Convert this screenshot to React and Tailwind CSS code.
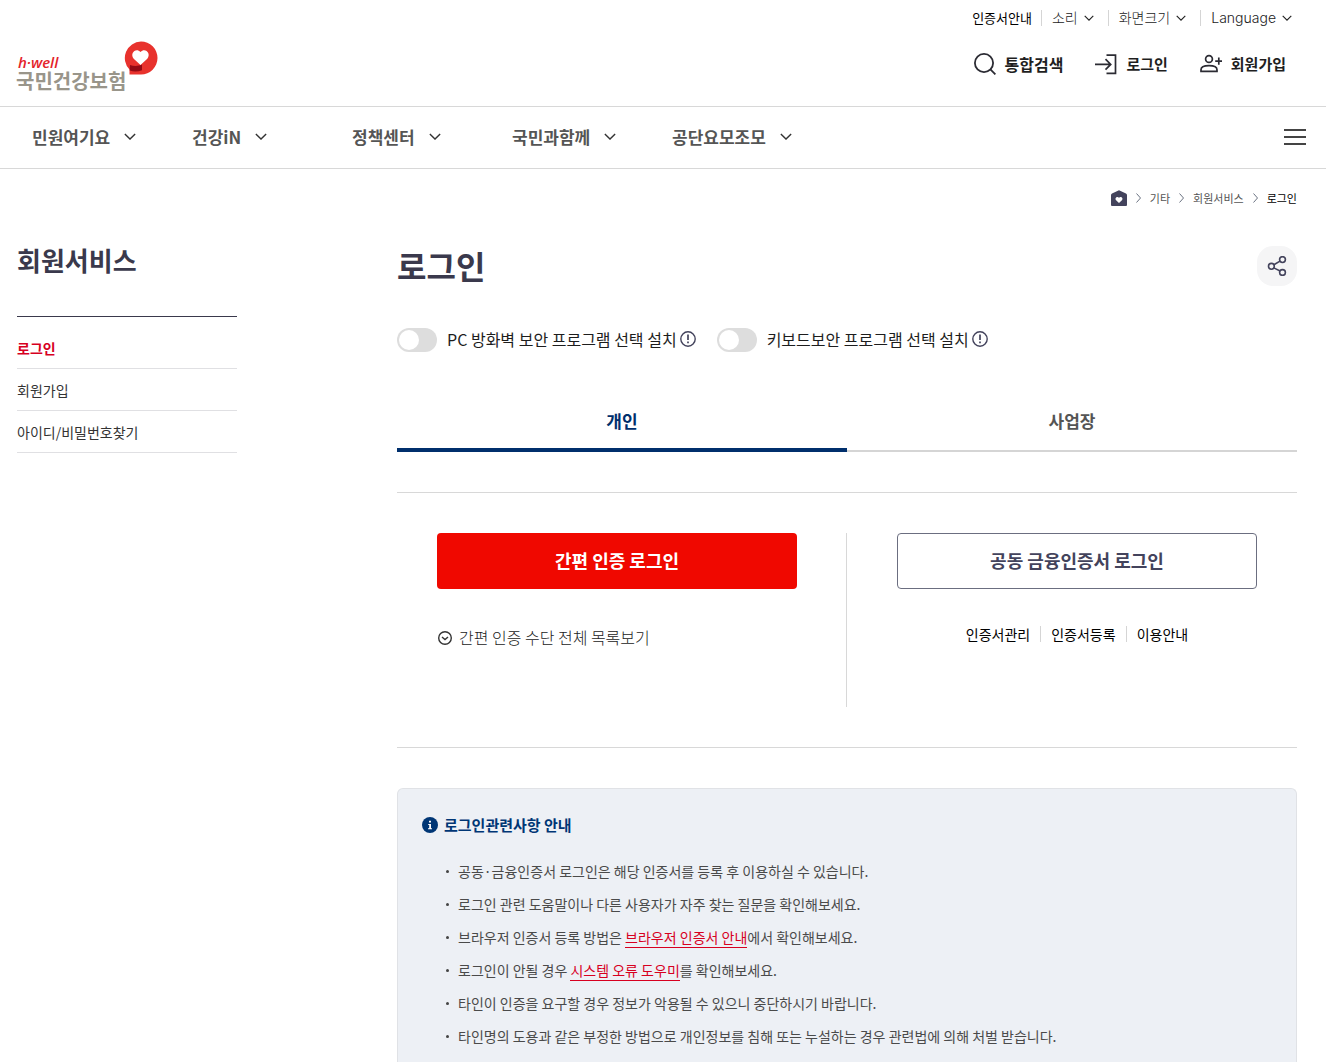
import React, { useState } from 'react';

const ChevronDown = ({ className }) => (
  <svg viewBox="0 0 14 8" className={className} fill="none" stroke="currentColor" aria-hidden="true">
    <path d="M1 1l6 6 6-6" strokeWidth="1.6" />
  </svg>
);

const ChevronRight = () => (
  <svg viewBox="0 0 5 10" className="h-[10px] w-[5px] text-gray-500" fill="none" stroke="currentColor" aria-hidden="true">
    <path d="M0.5 0.5L4.500 5 0.5 9.500" strokeWidth="1" />
  </svg>
);

const SearchIcon = () => (
  <svg viewBox="0 0 22 22" className="size-[22px]" fill="none" stroke="#2b2b33" strokeWidth="1.8" aria-hidden="true">
    <circle cx="10" cy="10" r="9.1" />
    <path d="M16.4 16.4l5 5" />
  </svg>
);

const LoginIcon = () => (
  <svg viewBox="0 0 22 22" className="size-[22px]" fill="none" stroke="#2b2b33" strokeWidth="1.7" aria-hidden="true">
    <path d="M11.5 2.2h9v18.2h-9M0 11.4h15.5M10.5 6.2l5.2 5.2-5.2 5.2" />
  </svg>
);

const JoinIcon = () => (
  <svg viewBox="0 0 22 22" className="size-[22px]" fill="none" stroke="#2b2b33" strokeWidth="1.7" aria-hidden="true">
    <circle cx="9" cy="6" r="3.4" />
    <path d="M1 18.4v-1.6c0-2.4 3-4.1 8-4.1s8 1.7 8 4.1v1.6zM18.8 4.6v7.2M15.2 8.2h7" />
  </svg>
);

const HomeIcon = () => (
  <svg viewBox="0 0 16 16" className="size-4" aria-hidden="true">
    <path d="M8 0.2L15 3.4q1 .5 1 1.6v10q0 1-1 1H1q-1 0-1-1V5q0-1.1 1-1.6z" fill="#43435c" />
    <path d="M8 13L5.1 10.2c-1.7-2 .9-4.5 2.9-2.5 2-2 4.6.5 2.9 2.5z" fill="#fff" />
  </svg>
);

const ShareIcon = () => (
  <svg viewBox="0 0 20 20" className="size-5" fill="none" stroke="#43435c" strokeWidth="1.6" aria-hidden="true">
    <circle cx="4.4" cy="10.3" r="2.9" />
    <circle cx="15.5" cy="3.6" r="2.9" />
    <circle cx="15.5" cy="16.5" r="2.9" />
    <path d="M6.9 8.8L13 5.1M6.8 11.9l6.3 3.1" />
  </svg>
);

const NoticeIcon = () => (
  <svg viewBox="0 0 16 16" className="size-4" aria-hidden="true">
    <circle cx="8" cy="8" r="7.2" fill="none" stroke="#43435c" strokeWidth="1.4" />
    <path d="M8 3.6v5.4M8 10.4v1.9" stroke="#43435c" strokeWidth="1.7" />
  </svg>
);

const Logo = () => (
  <a href="#" aria-label="국민건강보험" className="flex items-start">
    <span className="flex flex-col pt-3">
      <span className="pl-[2px] font-['Open_Sans',sans-serif] text-[15px] leading-[18px] font-semibold text-[#e4222a] italic">
        h·well
      </span>
      <span className="text-[20px] leading-5 font-bold text-[#99958a]">국민건강보험</span>
    </span>
    <svg viewBox="0 0 34 34" className="-ml-[2px] size-[34px]" aria-hidden="true">
      <path d="M17 0.5a16.5 16.5 0 0 1 0 33H5.5V28.500A16.500 16.500 0 0 1 17 0.500z" fill="#e8322d" />
      <path d="M16.500 24L9.700 17.700C5.500 12.700 11.700 6.200 16.500 11c4.800-4.800 11 1.700 6.800 6.700z" fill="#fff" />
      <path d="M6 24q6 2 12-.2v5.400Q12 31.500 5.700 29.600z" fill="#930a14" />
    </svg>
  </a>
);

const menus = ['민원여기요', '건강iN', '정책센터', '국민과함께', '공단요모조모'];

const Divider = () => <span className="h-4 w-px bg-[#d5d5d5]" />;

const Header = () => (
  <header>
    <div className="flex h-[106px] justify-between pl-4">
      <div className="pt-[41px]">
        <Logo />
      </div>
      <div className="flex flex-col items-end">
        <div className="flex h-[35px] items-center pr-[34px] text-[14px] font-light text-[#222]">
          <a href="#" className="mr-[9px] text-[13px] font-normal text-black">인증서안내</a>
          <Divider />
          <button type="button" className="mr-[14px] ml-[10px] flex items-center gap-[6px]">
            소리 <ChevronDown className="h-[6px] w-[10px]" />
          </button>
          <Divider />
          <button type="button" className="mr-[14px] ml-[10px] flex items-center gap-[6px]">
            화면크기 <ChevronDown className="h-[6px] w-[10px]" />
          </button>
          <Divider />
          <button type="button" className="ml-[10px] flex items-center gap-[6px]">
            <span className="font-['Inter',sans-serif]">Language</span>
            <ChevronDown className="h-[6px] w-[10px]" />
          </button>
        </div>
        <div className="flex h-[58px] items-center gap-8 pr-10 text-[15px] font-bold text-[#1f1f1f]">
          <button type="button" className="flex items-center gap-[9px] text-[16px]">
            <SearchIcon /> 통합검색
          </button>
          <a href="#" className="flex items-center gap-[9px]">
            <LoginIcon /> 로그인
          </a>
          <a href="#" className="flex items-center gap-[9px]">
            <JoinIcon /> 회원가입
          </a>
        </div>
      </div>
    </div>
    <div className="flex h-[63px] items-center justify-between border-y border-[#d8d8d8] pr-5 pb-[2px] pl-8">
      <nav className="flex">
        {menus.map((menu) => (
          <button
            key={menu}
            type="button"
            className="flex w-40 items-center gap-[14px] text-[17px] font-bold text-[#555]"
          >
            {menu} <ChevronDown className="h-[7px] w-[12px] text-[#333]" />
          </button>
        ))}
      </nav>
      <button type="button" aria-label="전체메뉴" className="flex flex-col gap-[5px]">
        <span className="h-[2px] w-[22px] bg-[#444]" />
        <span className="h-[2px] w-[22px] bg-[#444]" />
        <span className="h-[2px] w-[22px] bg-[#444]" />
      </button>
    </div>
  </header>
);

const Breadcrumb = () => (
  <nav aria-label="breadcrumb" className="flex h-[58px] items-center justify-end gap-[9px] text-[11px] text-[#555]">
    <a href="#" aria-label="홈"><HomeIcon /></a>
    <ChevronRight />
    <a href="#">기타</a>
    <ChevronRight />
    <a href="#">회원서비스</a>
    <ChevronRight />
    <span className="text-black">로그인</span>
  </nav>
);

const Sidebar = () => (
  <aside className="w-[220px] shrink-0">
    <h2 className="flex h-[89px] items-start pt-[15px] text-[26px] leading-9 font-bold text-[#3a394c]">회원서비스</h2>
    <ul className="border-t border-[#3a394c] pt-[10px] text-[14px] text-[#333]">
      <li className="border-b border-[#e0e0e3]">
        <a href="#" aria-current="page" className="block pt-px leading-10 font-bold text-[#d7001f]">로그인</a>
      </li>
      <li className="border-b border-[#e0e0e3]">
        <a href="#" className="block pt-px leading-10">회원가입</a>
      </li>
      <li className="border-b border-[#e0e0e3]">
        <a href="#" className="block pt-px leading-10">아이디/비밀번호찾기</a>
      </li>
    </ul>
  </aside>
);

const ToggleOption = ({ id, label }) => (
  <div className="flex items-center">
    <input
      id={id}
      type="checkbox"
      role="switch"
      className="h-6 w-10 appearance-none rounded-full bg-[#ddd] p-[2px] before:block before:size-5 before:rounded-full before:bg-white checked:bg-[#003675] checked:before:ml-4"
    />
    <div className="flex items-center gap-[3px] pb-[2px] pl-[10px]">
      <label htmlFor={id} className="text-[16px] leading-6 text-[#1d1d1d]">{label}</label>
      <button type="button" aria-label={`${label} 안내`}>
        <NoticeIcon />
      </button>
    </div>
  </div>
);

const Tab = ({ active, onClick, children }) => (
  <button
    type="button"
    role="tab"
    aria-selected={active}
    onClick={onClick}
    className={`flex h-[62px] flex-1 justify-center pt-[19px] text-[17px] leading-6 font-bold ${
      active ? 'border-b-4 border-[#002f6c] text-[#002f6c]' : 'border-b-2 border-[#d5d5d5] text-[#555]'
    }`}
  >
    {children}
  </button>
);

const LoginMethods = () => (
  <section className="mt-10 flex border-y border-[#d8d8d8] py-10">
    <div className="h-[174px] flex-1 border-r border-[#d8d8d8] pr-[49px] pl-10">
      <button type="button" className="h-14 w-full rounded bg-[#f00800] pb-[2px] text-[18px] font-bold text-white">
        간편 인증 로그인
      </button>
      <button type="button" className="mt-9 flex items-center gap-[6px] text-[16px] leading-6 font-light text-[#222]">
        <svg viewBox="0 0 16 16" className="size-4" fill="none" stroke="#333" strokeWidth="1.4" aria-hidden="true">
          <circle cx="8" cy="9" r="6.3" />
          <path d="M5 8l3 2.6L11 8" />
        </svg>
        간편 인증 수단 전체 목록보기
      </button>
    </div>
    <div className="flex-1 pr-10 pl-[50px]">
      <button type="button" className="h-14 w-full rounded border border-[#6b6e80] pb-[2px] text-[18px] font-bold text-[#43435c]">
        공동 금융인증서 로그인
      </button>
      <div className="mt-[33px] flex items-center justify-center gap-[10px] text-[14px] leading-6 text-black">
        <a href="#">인증서관리</a>
        <Divider />
        <a href="#">인증서등록</a>
        <Divider />
        <a href="#">이용안내</a>
      </div>
    </div>
  </section>
);

const InlineLink = ({ children }) => (
  <a href="#" className="border-b border-[#d7001f] text-[#d7001f]">{children}</a>
);

const notices = [
  '공동·금융인증서 로그인은 해당 인증서를 등록 후 이용하실 수 있습니다.',
  '로그인 관련 도움말이나 다른 사용자가 자주 찾는 질문을 확인해보세요.',
  <>브라우저 인증서 등록 방법은 <InlineLink>브라우저 인증서 안내</InlineLink>에서 확인해보세요.</>,
  <>로그인이 안될 경우 <InlineLink>시스템 오류 도우미</InlineLink>를 확인해보세요.</>,
  '타인이 인증을 요구할 경우 정보가 악용될 수 있으니 중단하시기 바랍니다.',
  '타인명의 도용과 같은 부정한 방법으로 개인정보를 침해 또는 누설하는 경우 관련법에 의해 처벌 받습니다.',
];

const NoticeBox = () => (
  <section className="mt-10 flex-1 rounded-t-md border border-b-0 border-[#e0e2e6] bg-[#edf0f5] px-6 pt-6">
    <h3 className="flex items-center gap-[6px] text-[15px] leading-6 font-bold text-[#003675]">
      <svg viewBox="0 0 16 16" className="size-4" aria-hidden="true">
        <circle cx="8" cy="8" r="8" fill="#003675" />
        <path d="M7 3.8h2v1.8H7zM6.2 7H9v4.2h1V12.3H6v-1.1h1.2V8.1h-1z" fill="#fff" />
      </svg>
      로그인관련사항 안내
    </h3>
    <ul className="mt-[18px] pl-6 text-[14px] leading-[33px] text-[#4a4a4a]">
      {notices.map((notice, i) => (
        <li key={i} className="flex items-center gap-[9px]">
          <span className="size-[3px] shrink-0 rounded-full bg-[#444]" />
          <p>{notice}</p>
        </li>
      ))}
    </ul>
  </section>
);

export default function App() {
  const [tab, setTab] = useState('personal');

  return (
    <div className="flex min-h-screen flex-col bg-white font-['Noto_Sans_CJK_KR',sans-serif]">
      <Header />
      <div className="flex flex-1 flex-col pr-[29px] pl-[17px]">
        <Breadcrumb />
        <div className="flex flex-1 gap-40">
          <Sidebar />
          <main className="flex flex-1 flex-col">
            <div className="flex items-start justify-between pt-[19px]">
              <h1 className="text-[32px] leading-[38px] font-bold text-[#3a394c]">로그인</h1>
              <button
                type="button"
                aria-label="공유하기"
                className="flex size-10 items-center justify-center rounded-2xl bg-[#f5f5f6]"
              >
                <ShareIcon />
              </button>
            </div>
            <div className="mt-[41px] flex gap-[21px]">
              <ToggleOption id="firewall" label="PC 방화벽 보안 프로그램 선택 설치" />
              <ToggleOption id="keyboard" label="키보드보안 프로그램 선택 설치" />
            </div>
            <div role="tablist" className="mt-[37px] flex">
              <Tab active={tab === 'personal'} onClick={() => setTab('personal')}>개인</Tab>
              <Tab active={tab === 'business'} onClick={() => setTab('business')}>사업장</Tab>
            </div>
            <LoginMethods />
            <NoticeBox />
          </main>
        </div>
      </div>
    </div>
  );
}
